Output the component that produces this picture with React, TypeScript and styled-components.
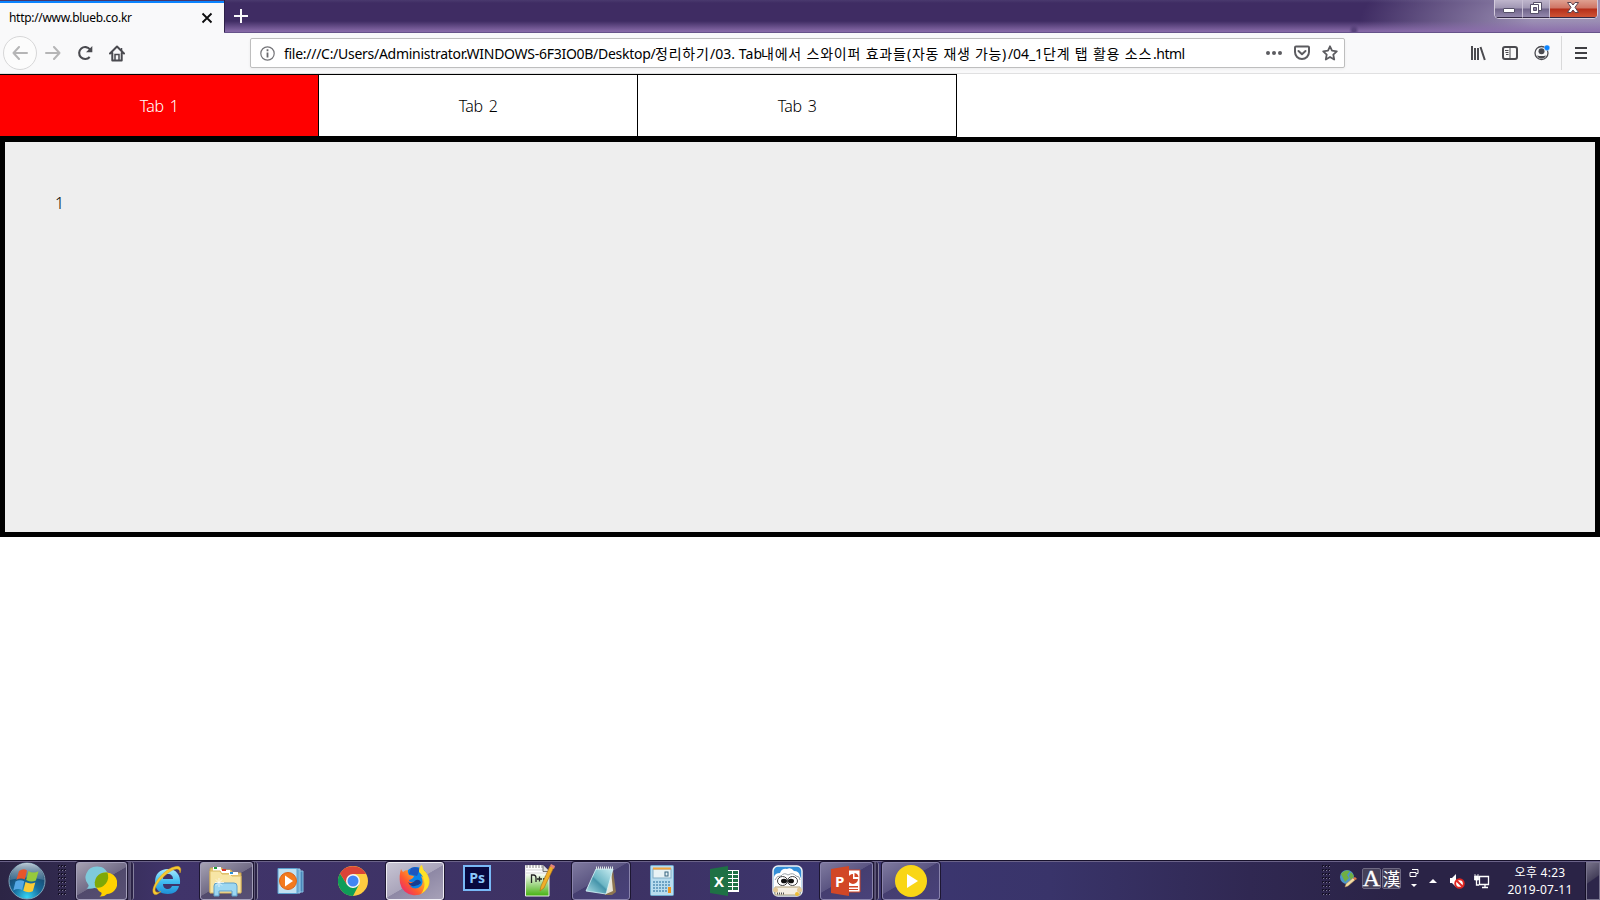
import React from 'react';
import styled, { createGlobalStyle, css } from 'styled-components';

const Global = createGlobalStyle`
  * { box-sizing: border-box; }
  html, body { margin: 0; padding: 0; background: #fff; }
  body { font-family: "Noto Sans", "Noto Sans CJK KR", sans-serif; color: #000; overflow: hidden; }
  svg { display: block; flex: none; }
`;

const Screen = styled.div`
  width: 1600px;
  height: 900px;
  display: flex;
  flex-direction: column;
  background: #fff;
`;

/* Browser chrome */
const TitleBar = styled.header`
  height: 33px;
  flex: none;
  display: flex;
  align-items: flex-start;
  border-bottom: 1px solid #66538a;
  background:
    radial-gradient(ellipse 5px 7px at 1354px 30px, #59437c 30%, transparent 100%),
    linear-gradient(180deg, transparent 21px, rgba(140, 110, 172, 0.9) 31px),
    radial-gradient(ellipse 230px 75px at 1590px 22px, rgba(160, 148, 184, 0.95) 25%, rgba(150, 135, 175, 0) 100%),
    linear-gradient(#4a3a6e 0, #3f2c63 3px, #3f2c63 100%);
`;
const BrowserTab = styled.div`
  width: 224px;
  height: 33px;
  display: flex;
  align-items: center;
  justify-content: space-between;
  padding: 0 11px 1px 9px;
  margin-top: 1px;
  border-top: 2px solid #0a84ff;
  background: #f9f9fa;
`;
const BrowserTabTitle = styled.span`
  font-size: 12px;
  line-height: 16px;
  letter-spacing: -0.31px;
  white-space: nowrap;
`;
const NewTab = styled.div`
  padding: 8px 0 0 9px;
  border-left: 1px solid #2d2048;
  height: 32px;
  flex: 1;
`;
const WindowControls = styled.div`
  display: flex;
  width: 104px;
  height: 19px;
  margin-right: 2px;
  border: 1px solid #d3cbdc;
  border-top: 0;
  border-radius: 0 0 5px 5px;
  overflow: hidden;
  box-shadow: inset 0 0 0 1px #3c3350;
`;
const WindowButton = styled.div<{ $w: number; $close?: boolean }>`
  width: ${p => p.$w}px;
  display: flex;
  align-items: center;
  justify-content: center;
  padding-bottom: 2px;
  border-right: 1px solid #c8bfd4;
  border-bottom: 1px solid #332945;
  background: ${p => p.$close
    ? 'linear-gradient(#dfa090 0, #cf7564 8px, #b52e19 9px, #cf5335 17px)'
    : 'linear-gradient(#bfb6cc 0, #a096b3 8px, #6f6389 9px, #9488ad 17px)'};
  &:last-child { border-right: 0; }
`;
const Toolbar = styled.div`
  height: 41px;
  flex: none;
  display: flex;
  align-items: center;
  padding: 0 7px 0 3px;
  background: #f9f9fa;
  border-bottom: 1px solid #e0e0e1;
`;
const BackButton = styled.div`
  width: 34px;
  height: 34px;
  border: 1px solid #d7d7d8;
  border-radius: 50%;
  display: flex;
  align-items: center;
  justify-content: center;
  background: #fcfcfc;
`;
const NavIcon = styled.div<{ $w: number }>`
  width: ${p => p.$w}px;
  display: flex;
  justify-content: center;
`;
const AddressBar = styled.div`
  width: 1095px;
  height: 30px;
  margin-left: 118px;
  padding: 0 6px 0 9px;
  display: flex;
  align-items: center;
  background: #fff;
  border: 1px solid #bebebe;
  border-radius: 2px;
  box-shadow: 0 1px 3px rgba(0, 0, 0, 0.06);
`;
const Url = styled.div`
  flex: 1;
  display: flex;
  margin-left: 9px;
  padding-top: 2px;
  font-size: 14px;
  line-height: 20px;
  white-space: pre;
`;
const UrlPart = styled.span<{ $w: number; $spacing: number }>`
  width: ${p => p.$w}px;
  flex: none;
  letter-spacing: ${p => p.$spacing}px;
`;
const AddressActions = styled.div`
  display: flex;
  align-items: center;
  gap: 12px;
`;
const ToolbarEnd = styled.div`
  margin-left: auto;
  display: flex;
  align-items: center;
  gap: 16px;
`;
const Divider = styled.i`
  width: 1px;
  height: 34px;
  background: #d9d9da;
  margin-left: -5px;
  margin-right: -9px;
`;

/* Page */
const Page = styled.main`
  flex: 1;
  background: #fff;
`;
const TabList = styled.div`
  display: flex;
  width: 957px;
  height: 63px;
  border-top: 1px solid #000;
  border-bottom: 1px solid #000;
`;
const PageTab = styled.div<{ $active?: boolean }>`
  width: 319px;
  border-right: 1px solid #000;
  display: flex;
  align-items: center;
  justify-content: center;
  padding-top: 1px;
  font-size: 16px;
  font-weight: 300;
  letter-spacing: -0.5px;
  word-spacing: 2.5px;
  color: ${p => (p.$active ? '#fff' : '#000')};
  background: ${p => (p.$active ? '#f00' : '#fff')};
`;
const Panel = styled.section`
  height: 400px;
  border: 5px solid #000;
  background: #eee;
  padding: 50px;
  font-size: 16px;
  font-weight: 300;
  line-height: 23px;
`;

/* Taskbar */
const Taskbar = styled.footer`
  height: 40px;
  flex: none;
  display: flex;
  color: #fff;
  border-top: 1px solid #17112b;
  box-shadow: inset 0 1px 0 #6a6288;
  background: linear-gradient(90deg, #2c2545 0, #332b52 90px, #40346a 170px, #3d3263 600px, #3c3670 900px, #39346a 1050px, #302852 1250px, #2a2346 1400px, #2a2346 100%);
`;
const Slot = styled.div<{ $w: number }>`
  width: ${p => p.$w}px;
  flex: none;
  display: flex;
  align-items: center;
  justify-content: center;
`;
const TaskButton = styled.div<{ $w: number; $tone?: 'light' | 'mid' | 'dim'; $gap?: number }>`
  width: ${p => p.$w}px;
  height: 38px;
  margin: 1px 0 0 ${p => p.$gap ?? 0}px;
  padding-right: ${p => (p.$w > 55 ? 0 : 2)}px;
  flex: none;
  display: flex;
  align-items: center;
  justify-content: center;
  border: 1px solid #a49fba;
  border-radius: 3px;
  box-shadow: 0 0 0 1px #1d1732;
  ${p => p.$tone === 'light' && css`
    border-color: #efedf4;
    background: linear-gradient(150deg, #c8c5d4 0, #aaa5bb 50%, #8e88a5 51%, #a7a1b8 100%);
  `}
  ${p => p.$tone === 'mid' && css`
    background: linear-gradient(150deg, #a6a2b3 0, #716b86 50%, #514a6c 51%, #585074 100%);
  `}
  ${p => p.$tone === 'dim' && css`
    border-color: #8a84ac;
    background: linear-gradient(150deg, #7f7a9f 0, #5b5582 45%, #453e70 46%, #49427a 100%);
  `}
`;
const StackEdge = styled.div<{ $w: number }>`
  width: ${p => p.$w}px;
  height: 38px;
  margin-top: 1px;
  flex: none;
  border-right: 1px solid #85809d;
  border-radius: 0 3px 3px 0;
  background: linear-gradient(90deg, #1d1732 1px, #4b4367 1px, #544c70 ${p => p.$w - 4}px, #8f8aa6 ${p => p.$w - 4}px, #2b2346 ${p => p.$w - 3}px);
`;
const Tray = styled.div`
  margin-left: auto;
  display: flex;
  align-items: center;
`;
const ImeKey = styled.div<{ $size: number }>`
  width: 19px;
  height: 21px;
  margin-right: 1px;
  margin-top: -4px;
  border: 1px solid #6e6982;
  border-radius: 2px;
  background: #454059;
  display: flex;
  align-items: center;
  justify-content: center;
  font: ${p => p.$size}px/19px "Liberation Serif", serif;
  -webkit-text-stroke: 0.3px #fff;
`;
const HanKey = styled(ImeKey)`
  font-family: "Noto Sans CJK TC", sans-serif;
  -webkit-text-stroke: 0;
`;
const Clock = styled.div`
  width: 82px;
  margin-left: 9px;
  text-align: center;
  font-size: 12px;
  line-height: 17px;
  letter-spacing: 0.25px;
  white-space: nowrap;
`;
const ShowDesktop = styled.div`
  width: 14px;
  height: 38px;
  margin-left: 5px;
  border: 1px solid #78738d;
  box-shadow: -1px 0 0 #151027;
  background: linear-gradient(145deg, #777289 0, #45405b 45%, #2d264a 48%);
`;

const Grip = () => (
  <svg width="9" height="32" viewBox="0 0 9 32">
    {[0, 4, 8, 12, 16, 20, 24, 28].map(y => [0, 3, 6].map(x => (
      <g key={`${x}-${y}`}><rect x={x} y={y} width="2" height="2" fill="#151026" /><rect x={x + 1} y={y + 1} width="1" height="1" fill="#7c7692" /></g>
    )))}
  </svg>
);

const StartOrb = () => (
  <svg width="38" height="38" viewBox="0 0 38 38">
    <defs>
      <radialGradient id="orb" cx=".5" cy=".95" r=".85"><stop offset="0" stopColor="#35d5f5" /><stop offset=".45" stopColor="#176d9e" /><stop offset="1" stopColor="#1b3a5c" /></radialGradient>
      <linearGradient id="orbShine" x2="0" y2="1"><stop stopColor="#d7e3ea" stopOpacity=".85" /><stop offset="1" stopColor="#7da5bc" stopOpacity=".35" /></linearGradient>
    </defs>
    <circle cx="19" cy="19" r="18" fill="url(#orb)" stroke="#7fa5b9" />
    <path d="M2 18a17 17 0 0 1 34 0Q19 13 2 18Z" fill="url(#orbShine)" />
    <path d="M11 9q4.500-3 8-.6l-2.200 9q-4.300-2.200-8.500.4Z" fill="#e8562a" />
    <path d="M20.500 9q4.500 3 10 .2l-2.600 9.400q-4.800 2.200-9.700-.7Z" fill="#97c93c" />
    <path d="M7.500 19.500q4.300-2.500 8.800-.3l-2.200 8.800q-4.300-2-8.800.4Z" fill="#55a8e5" />
    <path d="M17.500 20q4.500 2.600 9.800.5l-2.500 8.700q-4.800 2.200-9.500-.5Z" fill="#fbcb35" />
  </svg>
);
const ChatIcon = () => (
  <svg width="32" height="32" viewBox="0 0 32 32">
    <path d="M11.500 1.500A11 11 0 0 0 3.500 20q.5 2-2 3.500 4.500.8 8-.5a11 11 0 1 0 2-21.500Z" fill="#7fcadb" />
    <path d="M21 7.500a10.600 10.600 0 0 0-4.500 20.200q.5 2.300-2 3.800 5 .3 7.500-2.500A10.700 10.700 0 0 0 21 7.500Z" fill="#ffd200" />
    <path d="M21 7.500A10.600 10.600 0 0 0 10.700 22.500 10.800 10.800 0 0 0 22.300 7.600Z" fill="#7fa806" />
  </svg>
);
const ExplorerE = () => (
  <svg width="32" height="32" viewBox="0 0 32 32">
    <defs><linearGradient id="ie" x2="0" y2="1"><stop stopColor="#a9ebff" /><stop offset=".5" stopColor="#43bdf2" /><stop offset="1" stopColor="#1e8fd6" /></linearGradient></defs>
    <path fillRule="evenodd" d="M17 4C9 4 4 9 4 17s5 12 13 12c6 0 10-3 11-8h-7c-1 2-2 3-4 3-3 0-5-2-5-5h17C30 10 25 4 17 4Zm-5 10c0-3 2-5 5-5s5 2 5 5Z" fill="url(#ie)" />
    <path d="M3 29C-2 24 11 5 23 2c6-2 8 1 6 6 0-5-4-5-9-2C10 12 1 24 5 27q2 1 5-.5Q5 31 3 29Z" fill="#f6ca32" stroke="#dca51c" strokeWidth=".5" />
  </svg>
);
const FolderIcon = () => (
  <svg width="33" height="32" viewBox="0 0 33 32">
    <path d="M1 4q0-1 1-1h11l2 2h7l2 3h8v19H1Z" fill="#e7ca76" stroke="#c9a34f" />
    <path d="M4 2h8v4H4Z" fill="#fff" /><path d="M5 2h3v2H5Z" fill="#229b3e" />
    <path d="M12 5h9v3h-9Z" fill="#fff" /><path d="M13 4h4v2h-4Z" fill="#d8352a" />
    <path d="M1 6h10l2 3h8l2 2h9v17H1Z" fill="#f7e5a5" stroke="#dcb960" />
    <path d="M20 7h9v3h-9Z" fill="#fff" /><path d="M21 7h3v2h-3Z" fill="#2c91d8" />
    <path d="M5 31V21q0-3 3-3h17q3 0 3 3v10h-5v-5H10v5Z" fill="#9cd7f1" stroke="#5e9fc8" />
    <path d="M10 13v9M6 17.500h9M7 14.500l6 6M13 14.500l-6 6" stroke="#fff" strokeWidth=".7" />
  </svg>
);
const MediaIcon = () => (
  <svg width="28" height="26" viewBox="0 0 28 26">
    <path d="M8 3h18v21H8Z" fill="#4a87b9" stroke="#86bfe2" /><path d="M5 1h18v24H5Z" fill="#73acd3" stroke="#9bcfed" />
    <path d="M1 .5h19v25H1Z" fill="#c1e1f1" stroke="#5ba0ce" />
    <circle cx="11" cy="13" r="8.500" fill="#f37a1e" stroke="#dc641a" /><path d="m8 7.500 8 5.500-8 5.500Z" fill="#fff" />
  </svg>
);
const ChromeIcon = () => (
  <svg width="30" height="30" viewBox="0 0 30 30">
    <circle cx="15" cy="15" r="15" fill="#ffcd40" />
    <path d="M2 7.500A15 15 0 0 0 15 30l6-11.500-6 3.500-6-3.500Z" fill="#0f9d58" />
    <path d="M2 7.500A15 15 0 0 1 28 8H15L9 18.500Z" fill="#db4437" />
    <circle cx="15" cy="15" r="7" fill="#f5f5f5" /><circle cx="15" cy="15" r="5.500" fill="#4285f4" />
  </svg>
);
const FirefoxIcon = () => (
  <svg width="32" height="32" viewBox="0 0 32 32">
    <defs><linearGradient id="fx" x1="1" x2="0" y2="1"><stop offset="0" stopColor="#fff44f" /><stop offset=".35" stopColor="#ffb22b" /><stop offset=".65" stopColor="#ff5b2e" /><stop offset="1" stopColor="#e31587" /></linearGradient></defs>
    <circle cx="17" cy="14" r="12" fill="#0a84e8" /><path d="M12 3q5-2 9 1l-3 7-8-2Z" fill="#1d56bf" />
    <path d="M2 4q1 2 2 3 2-2 5-2-1 2 1 5l5 1q-1 3-5 4 0 2 2 2 3 0 5-1-2 5-6 5 5 5 11 0 3-4 0-10 3 1 4 3-2-5-6-8 0-5 3-6 0 4 4 7 5 7 3 13A15 15 0 0 1 1 18Q0 10 2 4Z" fill="url(#fx)" />
    <path d="M23 0q0 4 3 7 6 8 3 15-3 5-7 7 5-7 3-13-1-6-5-9 0-4 3-7Z" fill="#ffe226" />
    <path d="M17 15q4-1 5 3-4 4-9 3-3-1-4-4 3 3 8-2Z" fill="#183e91" />
  </svg>
);
const PsBadge = styled.div`
  width: 28px;
  height: 26px;
  margin-top: -5px;
  border: 2px solid #79b9f7;
  background: #08083f;
  color: #8cc8fb;
  font: 700 14px/22px "Open Sans", sans-serif;
  text-align: center;
`;
const NotepadPlus = () => (
  <svg width="31" height="33" viewBox="0 0 31 33">
    <defs><linearGradient id="npp" x2="0" y2="1"><stop offset=".25" stopColor="#fff" /><stop offset="1" stopColor="#45b010" /></linearGradient></defs>
    <path d="M1.500 1.500H19l6 6V32H1.500Z" fill="url(#npp)" stroke="#ececec" /><path d="M2 6h18M2 9h22" stroke="#d3d3d3" />
    <path d="M19 1.500v6h6" fill="#ddd" stroke="#555" strokeWidth=".8" />
    <path d="M3 1v3m3-3v3m3-3v3m3-3v3m3-3v3m3-3v3" stroke="#888" />
    <path d="M7.500 19v-8h2q2.500 0 2.500 3v4M13 15h5m-2.500-2.500v5M19 15h5m-2.500-2.500v5" fill="none" stroke="#252525" strokeWidth="1.300" />
    <path d="m26 2 4 1-10 21-4 3 1-5Z" fill="#f1af28" stroke="#a77017" strokeWidth=".6" /><path d="m26 2 1-2 4 2-1 3Z" fill="#e5847b" />
  </svg>
);
const NotepadIcon = () => (
  <svg width="32" height="30" viewBox="0 0 32 30">
    <defs><linearGradient id="pad" x1="1" x2="0" y2="1"><stop stopColor="#cbeef2" /><stop offset=".5" stopColor="#6bb5c4" /><stop offset=".55" stopColor="#4594aa" /><stop offset="1" stopColor="#b1e3ea" /></linearGradient></defs>
    <path d="m28 4 3 22-4 3h-7Z" fill="#8d7551" /><path d="m26 4 2 21-7 3Z" fill="#e9e5d7" />
    <path d="M11 3h17l-7 25-20-3Z" fill="url(#pad)" stroke="#d9f7fa" strokeWidth=".8" />
    <path d="M11 2h17" stroke="#dce5e7" strokeWidth="3" strokeDasharray="1 1" />
  </svg>
);
const CalculatorIcon = () => (
  <svg width="24" height="31" viewBox="0 0 24 31">
    <rect x=".5" y=".5" width="23" height="30" rx="1" fill="#b8dcef" stroke="#6ea8ce" /><rect x="3" y="4" width="18" height="9" fill="#e8f2f5" stroke="#83adc5" />
    <path d="M3 3.500h18" stroke="#f3a33a" strokeWidth="2" /><rect x="15" y="7" width="3" height="4" fill="none" stroke="#35637f" />
    {[16, 19, 22, 25].map(y => [3, 6, 9, 12, 15, 18].map(x => <rect key={`${x}-${y}`} x={x} y={y} width="2" height="2" fill="#6ca2c4" />))}
    <path d="M18 22h3v6h-3z" fill="#ee9420" />
  </svg>
);
const BadgeLetter = styled.text`
  font: 700 15px "Open Sans", sans-serif;
  fill: #fff;
`;
const ExcelIcon = () => (
  <svg width="30" height="30" viewBox="0 0 30 30">
    <path d="M16 4h13v22H16Z" fill="#fff" />
    {[5, 9, 13, 17, 21].map(y => <path key={y} d={`M18 ${y}h4v3h-4zm5 0h5v3h-5z`} fill="#1e7145" />)}
    <path d="m0 3 18-3v30L0 27Z" fill="#1e7145" /><BadgeLetter x="4" y="20.500">X</BadgeLetter>
  </svg>
);
const PowerPointIcon = () => (
  <svg width="30" height="30" viewBox="0 0 30 30">
    <path d="M16 4h13v22H16Z" fill="#fff" stroke="#d24726" />
    <path d="M22 8v5h5a5 5 0 1 1-5-5Z" fill="#d24726" /><path d="M23.500 7q3.500.5 4 4h-4Z" fill="#d24726" /><path d="M18 20h9v1.500h-9zm0 3h9v1h-9z" fill="#d24726" />
    <path d="m0 3 18-3v30L0 27Z" fill="#d24726" /><BadgeLetter x="4" y="20.500">P</BadgeLetter>
  </svg>
);
const CloudFace = () => (
  <svg width="31" height="32" viewBox="0 0 31 32">
    <rect x="1" y="1" width="29" height="30" rx="5" fill="#348fd8" stroke="#eef3f6" strokeWidth="1.500" />
    <path d="M2 12q1-4 6-4 2-5 7-4 4-2 7 2 5 0 6 5 2 3 1 6v7H2Z" fill="#fff" />
    <path d="M3 15q2-5 6-4 3-4 7-1 5-3 8 1 4 0 4 4" fill="none" stroke="#9aa2a8" />
    <ellipse cx="10.500" cy="16" rx="5" ry="4.500" fill="#fff" stroke="#444" /><ellipse cx="20.500" cy="16" rx="5" ry="4.500" fill="#fff" stroke="#444" /><ellipse cx="12" cy="16" rx="3" ry="2.300" fill="#111" /><ellipse cx="19" cy="16" rx="3" ry="2.300" fill="#111" />
    <path d="M3 22h25v8H3Z" fill="#f4eee2" stroke="#b2a17a" /><path d="M5 28.500h8" stroke="#555" strokeWidth="2" strokeDasharray="1 1" /><circle cx="3.500" cy="25" r="2.500" fill="#e4c894" /><circle cx="27.500" cy="25" r="2.500" fill="#e4c894" /><circle cx="25" cy="29" r="2" fill="#efbd36" />
  </svg>
);
const PlayerIcon = () => (
  <svg width="32" height="32" viewBox="0 0 32 32"><circle cx="16" cy="16" r="16" fill="#f9d616" /><path d="m12 9 11 7-11 7Z" fill="#fff" /></svg>
);
const GlobePencil = () => (
  <svg width="18" height="19" viewBox="0 0 18 19">
    <circle cx="8" cy="8" r="7" fill="#4d94c9" /><path d="M2 5q4-5 9-3l-3 4 2 3-4 4-2-4Zm10-2 3 4-3 4-2-4Z" fill="#6faf42" />
    <path d="m7 15 7-6 2 2-7 6-3 1Z" fill="#f3dca4" stroke="#b68f55" strokeWidth=".5" /><path d="m14 9 2-1 2 2-2 1Z" fill="#e37946" />
  </svg>
);
const TraySlot = styled(Slot)<{ $lift: number }>`
  padding-bottom: ${p => p.$lift}px;
`;

export default function App() {
  return (
    <Screen>
      <Global />
      <TitleBar>
        <BrowserTab>
          <BrowserTabTitle>http://www.blueb.co.kr</BrowserTabTitle>
          <svg width="12" height="12" viewBox="0 0 12 12"><path d="m1.500 1.500 9 9m0-9-9 9" stroke="#0c0c0d" strokeWidth="1.800" /></svg>
        </BrowserTab>
        <NewTab>
          <svg width="15" height="15" viewBox="0 0 15 15"><path d="M7 1v14M0 8h14" stroke="#f9f9fa" strokeWidth="2" /></svg>
        </NewTab>
        <WindowControls>
          <WindowButton $w={29}>
            <svg width="12" height="10" viewBox="0 0 12 10"><rect x=".5" y="5.500" width="11" height="4" rx=".5" fill="#fff" stroke="#565069" /></svg>
          </WindowButton>
          <WindowButton $w={27}>
            <svg width="12" height="12" viewBox="0 0 12 12"><path d="M3.500.5h8v8h-8z" fill="#fff" stroke="#565069" /><path d="M.5 2.500h8v9h-8z" fill="#fff" stroke="#565069" /><path d="M3.500 5.500h3v3h-3z" fill="#8d83a3" stroke="#565069" /></svg>
          </WindowButton>
          <WindowButton $w={48} $close>
            <svg width="12" height="11" viewBox="0 0 12 11"><path d="M.5.500H4l2 2.500L8 .5h3.500L8 5.300l3.500 5.200H8L6 8l-2 2.500H.5L4 5.300Z" fill="#fff" stroke="#5a4450" /></svg>
          </WindowButton>
        </WindowControls>
      </TitleBar>

      <Toolbar>
        <BackButton>
          <svg width="16" height="14" viewBox="0 0 16 14"><path d="M15 7H1.500M7 1 1.500 7 7 13" fill="none" stroke="#b5b5b6" strokeWidth="2" strokeLinecap="round" strokeLinejoin="round" /></svg>
        </BackButton>
        <NavIcon $w={32}>
          <svg width="16" height="14" viewBox="0 0 16 14"><path d="M1 7h13.500M9 1l5.500 6L9 13" fill="none" stroke="#b5b5b6" strokeWidth="2" strokeLinecap="round" strokeLinejoin="round" /></svg>
        </NavIcon>
        <NavIcon $w={32}>
          <svg width="16" height="16" viewBox="0 0 16 16"><path d="M12.700 12A6 6 0 1 1 13 4.500" fill="none" stroke="#4a4a4f" strokeWidth="2.100" /><path d="M15.300 1v6.300H9Z" fill="#4a4a4f" /></svg>
        </NavIcon>
        <NavIcon $w={31}>
          <svg width="16" height="17" viewBox="0 0 16 17"><path d="M1 8.500 8 1.500l7 7M3.300 8v7.500h9.400V8" fill="none" stroke="#4a4a4f" strokeWidth="2" strokeLinecap="round" strokeLinejoin="round" /><path d="M6 15V9.500h4V15M12.500 3v3" stroke="#4a4a4f" strokeWidth="1.500" fill="none" /></svg>
        </NavIcon>
        <AddressBar>
          <svg width="15" height="15" viewBox="0 0 15 15"><circle cx="7.500" cy="7.500" r="6.700" fill="none" stroke="#747478" strokeWidth="1.200" /><path d="M7.500 6.500v5M7.500 3.300v1.900" stroke="#68686c" strokeWidth="1.800" /></svg>
          <Url>
            <UrlPart $w={371} $spacing={-0.28}>file:///C:/Users/Administrator.WINDOWS-6F3IO0B/Desktop/</UrlPart>
            <UrlPart $w={55} $spacing={0.8}>정리하기</UrlPart>
            <UrlPart $w={51} $spacing={0.05}>/03. Tab</UrlPart>
            <UrlPart $w={146} $spacing={0.8}>내에서 스와이퍼 효과들</UrlPart>
            <UrlPart $w={101} $spacing={0.7}>(자동 재생 가능)</UrlPart>
            <UrlPart $w={35} $spacing={-0.1}>/04_1</UrlPart>
            <UrlPart $w={110} $spacing={0.8}>단계 탭 활용 소스</UrlPart>
            <UrlPart $w={31} $spacing={-0.5}>.html</UrlPart>
          </Url>
          <AddressActions>
            <svg width="16" height="16" viewBox="0 0 16 16"><circle cx="2" cy="8" r="2" fill="#5c5c60" /><circle cx="8" cy="8" r="2" fill="#5c5c60" /><circle cx="14" cy="8" r="2" fill="#5c5c60" /></svg>
            <svg width="16" height="16" viewBox="0 0 16 16"><path d="M1 2.500q0-1 1-1h12q1 0 1 1V7A7 7 0 0 1 1 7Z" fill="none" stroke="#5c5c60" strokeWidth="2" /><path d="m4.500 6 3.500 3.200L11.500 6" fill="none" stroke="#5c5c60" strokeWidth="2" strokeLinecap="round" strokeLinejoin="round" /></svg>
            <svg width="16" height="16" viewBox="0 0 16 16"><path d="m8 1.300 2 4.400 4.800.6-3.500 3.300.9 4.900L8 12l-4.200 2.500.9-4.900L1.200 6.300 6 5.700Z" fill="none" stroke="#5c5c60" strokeWidth="1.800" strokeLinejoin="round" /></svg>
          </AddressActions>
        </AddressBar>
        <ToolbarEnd>
          <svg width="16" height="16" viewBox="0 0 16 16"><path d="M2 1v14M5 3v12M8 3v12m2.500-13 4.300 13" stroke="#4a4a4f" strokeWidth="2" fill="none" /></svg>
          <svg width="16" height="16" viewBox="0 0 16 16"><rect x="1" y="2" width="14" height="12" rx="2" fill="none" stroke="#4a4a4f" strokeWidth="2" /><path d="M8 2v12" stroke="#4a4a4f" /><path d="M3 5.500h3.500M3.500 7.500h3M4 9.500h2.500" stroke="#4a4a4f" /></svg>
          <svg width="16" height="16" viewBox="0 0 16 16"><circle cx="7.500" cy="8" r="6.500" fill="none" stroke="#4a4a4f" strokeWidth="1.300" /><circle cx="7.500" cy="6.300" r="3" fill="#4a4a4f" /><path d="M3 10.500q4.500 1 9 0-1 3-4.500 3T3 10.500Z" fill="#4a4a4f" /><circle cx="13" cy="2.800" r="2.800" fill="#0a84ff" stroke="#f9f9fa" strokeWidth=".4" /></svg>
          <Divider />
          <NavIcon $w={24}>
            <svg width="14" height="14" viewBox="0 0 14 14"><path d="M1 2h12M1 7h12M1 12h12" stroke="#3f3f43" strokeWidth="2" /></svg>
          </NavIcon>
        </ToolbarEnd>
      </Toolbar>

      <Page>
        <TabList>
          <PageTab $active>Tab 1</PageTab>
          <PageTab>Tab 2</PageTab>
          <PageTab>Tab 3</PageTab>
        </TabList>
        <Panel>1</Panel>
      </Page>

      <Taskbar>
        <Slot $w={54}><StartOrb /></Slot>
        <Slot $w={16}><Grip /></Slot>
        <TaskButton $w={51} $tone="mid" $gap={6}><ChatIcon /></TaskButton>
        <StackEdge $w={7} />
        <Slot $w={66}><ExplorerE /></Slot>
        <TaskButton $w={53} $tone="mid"><FolderIcon /></TaskButton>
        <StackEdge $w={5} />
        <Slot $w={65}><MediaIcon /></Slot>
        <Slot $w={60}><ChromeIcon /></Slot>
        <TaskButton $w={58} $tone="light" $gap={3}><FirefoxIcon /></TaskButton>
        <Slot $w={66}><PsBadge>Ps</PsBadge></Slot>
        <Slot $w={58}><NotepadPlus /></Slot>
        <TaskButton $w={58} $tone="dim" $gap={4}><NotepadIcon /></TaskButton>
        <Slot $w={64}><CalculatorIcon /></Slot>
        <Slot $w={62}><ExcelIcon /></Slot>
        <Slot $w={62}><CloudFace /></Slot>
        <TaskButton $w={53} $tone="dim" $gap={2}><PowerPointIcon /></TaskButton>
        <StackEdge $w={6} />
        <TaskButton $w={58} $tone="dim" $gap={3}><PlayerIcon /></TaskButton>
        <Tray>
          <Slot $w={14}><Grip /></Slot>
          <TraySlot $w={29} $lift={4}><GlobePencil /></TraySlot>
          <ImeKey $size={24}>A</ImeKey>
          <HanKey $size={18}>漢</HanKey>
          <TraySlot $w={23} $lift={5}>
            <svg width="10" height="22" viewBox="0 0 10 22"><path d="M3 2.500h6v4H7M1 5.500h6v4H1Z" fill="none" stroke="#fff" /><path d="M2 17h6l-3 3Z" fill="#fff" /></svg>
          </TraySlot>
          <Slot $w={15}>
            <svg width="8" height="8" viewBox="0 0 8 8"><path d="M0 6h8L4 2Z" fill="#fff" /></svg>
          </Slot>
          <Slot $w={33}>
            <svg width="16" height="16" viewBox="0 0 16 16"><path d="M1 5h2l4-4v13l-4-4H1Z" fill="#fff" /><circle cx="10.500" cy="10.500" r="4.300" fill="#fff" stroke="#e12622" strokeWidth="1.900" /><path d="m7.500 7.500 6 6" stroke="#e12622" strokeWidth="1.900" /></svg>
          </Slot>
          <Slot $w={17}>
            <svg width="16" height="16" viewBox="0 0 16 16"><path d="M5.500 3.500h9v8h-9zM8 14.500h6M11 12v2M2.500 7v5H5" fill="none" stroke="#fff" strokeWidth="1.300" /><path d="M.5 3h4v4h-4zM1 1v2m3-2v2" fill="#fff" stroke="#fff" strokeWidth=".8" /></svg>
          </Slot>
          <Clock>오후 4:23<br />2019-07-11</Clock>
          <ShowDesktop />
        </Tray>
      </Taskbar>
    </Screen>
  );
}
